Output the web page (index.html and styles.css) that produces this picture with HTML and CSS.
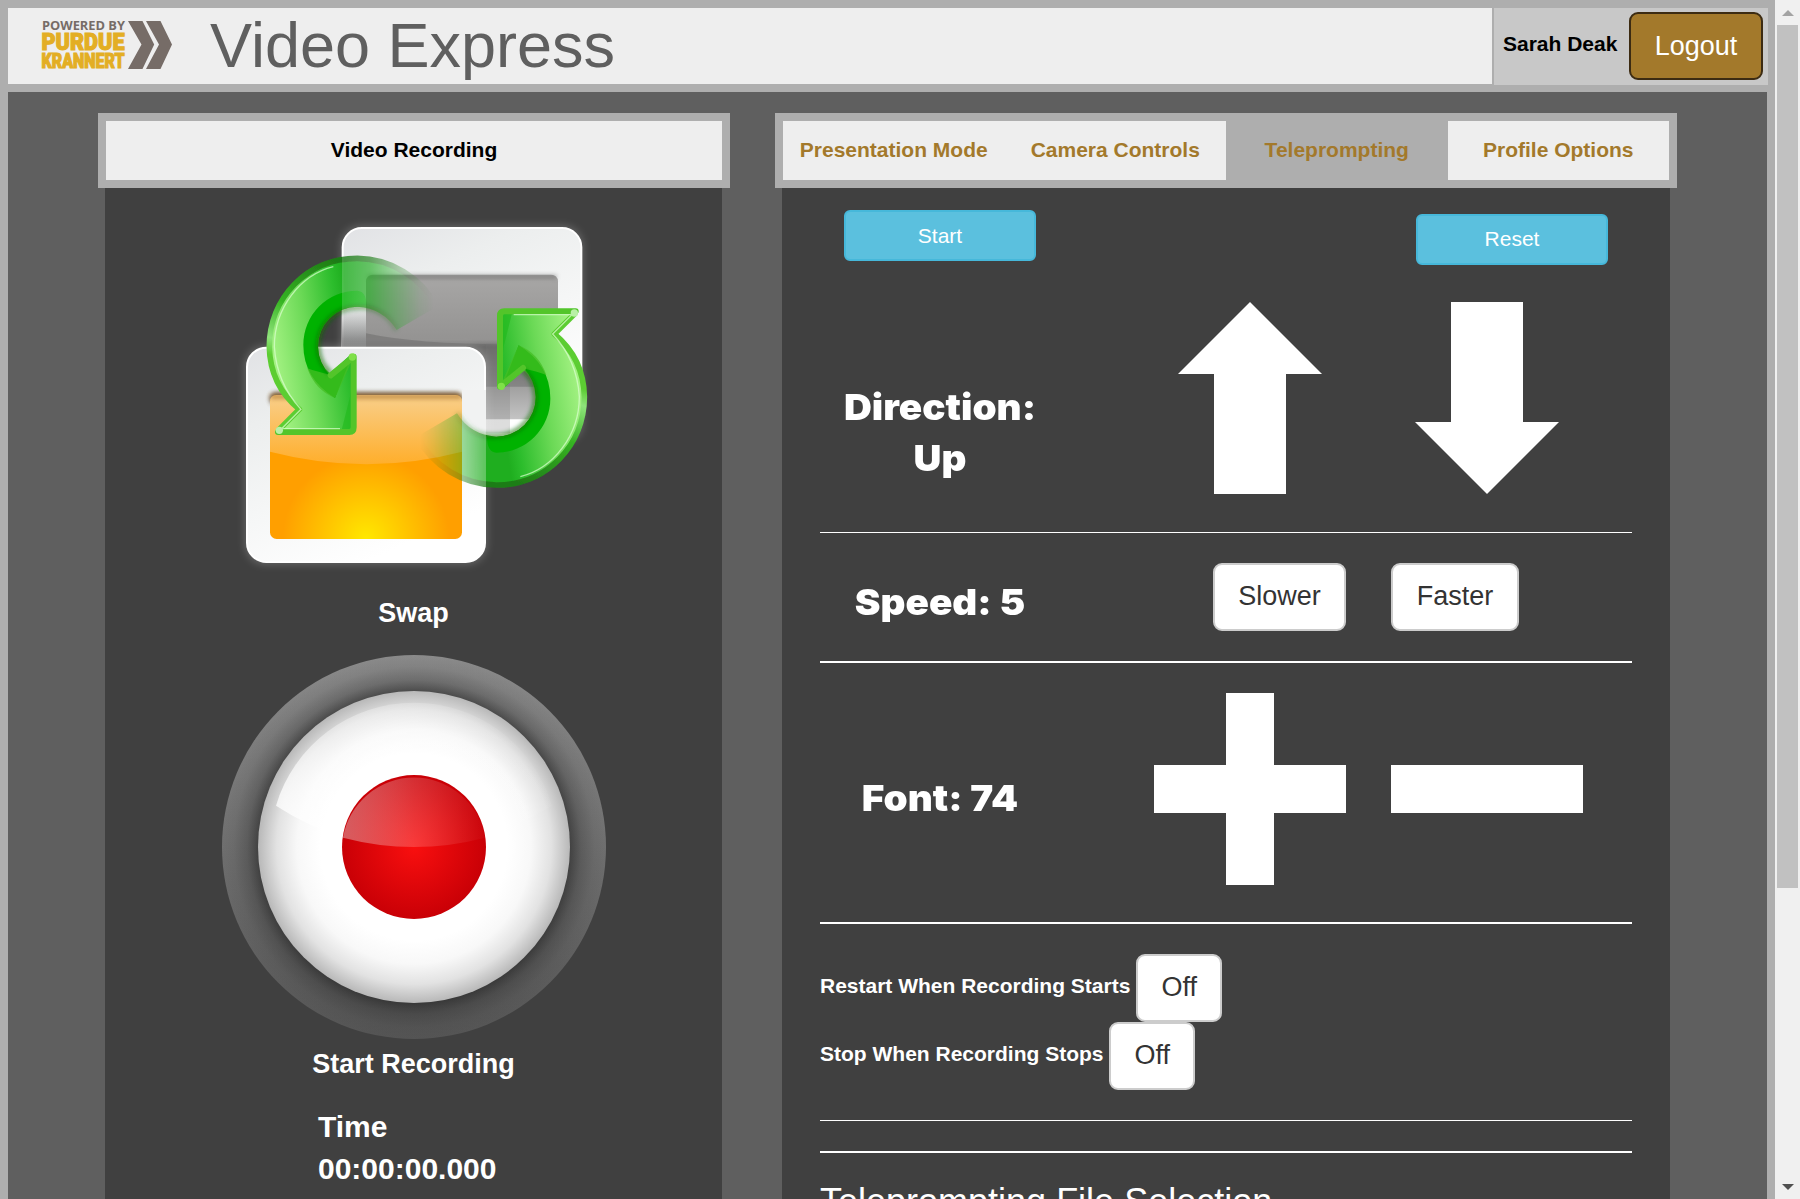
FILE: index.html
```html
<!DOCTYPE html>
<html lang="en">
<head>
<meta charset="utf-8">
<title>Video Express</title>
<link rel="stylesheet" href="styles.css">
</head>
<body>
<div class="window">
  <div class="app">
    <header class="header">
      <div class="brand">
        <svg class="logo" viewBox="0 0 140 50" width="140" height="50" role="img" aria-label="Powered by Purdue Krannert">
          <text class="logo-small" x="2" y="10" textLength="83" lengthAdjust="spacingAndGlyphs">POWERED BY</text>
          <text class="logo-purdue" x="1.500" y="30" textLength="83" lengthAdjust="spacingAndGlyphs">PURDUE</text>
          <text class="logo-krannert" x="1.500" y="47.700" textLength="83" lengthAdjust="spacingAndGlyphs">KRANNERT</text>
          <path fill="#766c67" d="M88 1h14.500l11.700 23.500L102.500 49H88l13.500-24.500zM106 1h14.500L132 24.500 120.500 49H106l13-24.500z"/>
        </svg>
        <h1 class="title">Video Express</h1>
      </div>
      <div class="user">
        <span class="user-name">Sarah Deak</span>
        <button class="btn btn-logout">Logout</button>
      </div>
    </header>

    <main class="main">
      <section class="card card-video">
        <div class="tabs"><div class="tab tab-title">Video Recording</div></div>
        <div class="body video-body">
          <svg class="swap-icon" viewBox="-18 0 1200 1182" width="400" height="394">
            <defs>
              <linearGradient id="frame" x1="0" y1="0" x2=".5" y2="1">
                <stop offset="0" stop-color="#e1e2e5"/><stop offset=".3" stop-color="#eceeee"/><stop offset="1" stop-color="#fff"/>
              </linearGradient>
              <linearGradient id="grey" x1="0" y1="0" x2="0" y2="1">
                <stop offset="0" stop-color="#a8a7a6"/><stop offset=".45" stop-color="#949392"/><stop offset=".5" stop-color="#757473"/><stop offset="1" stop-color="#c4c4c4"/>
              </linearGradient>
              <radialGradient id="orange" gradientUnits="userSpaceOnUse" cx="438" cy="1015" r="250">
                <stop offset="0" stop-color="#ffe800"/><stop offset="1" stop-color="#ff9f00"/>
              </radialGradient>
              <linearGradient id="gloss" x1="0" y1="0" x2="0" y2="1">
                <stop offset="0" stop-color="#f8d49a" stop-opacity=".9"/><stop offset="1" stop-color="#ffb030" stop-opacity=".9"/>
              </linearGradient>
              <linearGradient id="shade" x1="0" y1="0" x2="0" y2="1">
                <stop offset="0" stop-color="#333" stop-opacity="0"/><stop offset="1" stop-color="#333" stop-opacity=".65"/>
              </linearGradient>
              <linearGradient id="green" gradientUnits="userSpaceOnUse" x1="155" y1="440" x2="400" y2="400">
                <stop offset="0" stop-color="#a4f283"/><stop offset=".45" stop-color="#6bd956"/><stop offset=".85" stop-color="#2cbd2c"/><stop offset="1" stop-color="#1fae1f"/>
              </linearGradient>
              <linearGradient id="edge" gradientUnits="userSpaceOnUse" x1="300" y1="168" x2="200" y2="480">
                <stop offset="0" stop-color="#1f7d17"/><stop offset=".5" stop-color="#36b422"/><stop offset=".85" stop-color="#8fe37b"/><stop offset="1" stop-color="#5bcd31"/>
              </linearGradient>
              <linearGradient id="fadeBack" gradientUnits="userSpaceOnUse" x1="366" y1="0" x2="640" y2="0">
                <stop offset="0" stop-color="#fff"/><stop offset="0" stop-color="#d0d0d0"/><stop offset=".3" stop-color="#a8a8a8"/><stop offset=".6" stop-color="#555"/><stop offset=".85" stop-color="#151515"/><stop offset="1" stop-color="#000"/>
              </linearGradient>
              <linearGradient id="fadeFront" gradientUnits="userSpaceOnUse" x1="443" y1="0" x2="640" y2="0">
                <stop offset="0" stop-color="#fff"/><stop offset="0" stop-color="#b8b8b8"/><stop offset=".4" stop-color="#666"/><stop offset=".8" stop-color="#1c1c1c"/><stop offset="1" stop-color="#000"/>
              </linearGradient>
              <mask id="tailBack" maskUnits="userSpaceOnUse" x="100" y="100" width="600" height="660"><rect x="100" y="100" width="600" height="660" fill="url(#fadeBack)"/><rect x="100" y="430" width="330" height="330" fill="#fff"/></mask>
              <mask id="tailFront" maskUnits="userSpaceOnUse" x="100" y="100" width="600" height="660"><rect x="100" y="100" width="600" height="660" fill="url(#fadeFront)"/></mask>
              <filter id="glow" x="-10%" y="-10%" width="120%" height="120%"><feGaussianBlur stdDeviation="13"/></filter>
              <filter id="soft" filterUnits="userSpaceOnUse" x="0" y="0" width="1200" height="1182"><feGaussianBlur stdDeviation="6"/></filter>
              <filter id="bevel" filterUnits="userSpaceOnUse" x="0" y="0" width="1200" height="1182"><feGaussianBlur stdDeviation="1.500"/></filter>
              <g id="arrow">
                <path fill="url(#green)" d="M650 320A272 272 0 0 0 412 175C260 175 147 295 147 440Q147 555 240 628L172 686Q165 703 185 700H388Q404 700 404 684V472Q398 458 386 469L330 520Q294 490 294 440A118 118 0 0 1 412 320Q490 325 530 390Z"/>
                <path fill="#00b200" d="M412 272Q440 274 440 320H412A118 118 0 0 0 294 440Q296 490 332 528Q360 520 390 480L345 594Q250 535 250 435A162 162 0 0 1 412 272Z"/>
                <path fill="#45be24" d="M332 525L402 468 345 594Q285 570 262 505Q290 515 332 525Z" opacity=".75"/>
                <path fill="#20b91a" d="M390 590L402 500V690H365Z" opacity=".6"/>
                <path fill="none" stroke="#126d08" stroke-opacity=".65" stroke-width="14" filter="url(#soft)" d="M530 390A118 118 0 0 0 412 322A118 118 0 0 0 294 440Q296 490 332 520"/>
                <path fill="none" stroke="url(#edge)" stroke-width="17" stroke-linejoin="round" filter="url(#bevel)" d="M650 320A272 272 0 0 0 412 175C260 175 148 295 148 440Q150 555 238 628L174 692"/>
                <path fill="none" stroke="#52c52b" stroke-width="18" stroke-linejoin="round" stroke-linecap="round" filter="url(#bevel)" d="M174 696H388Q401 696 401 682V470L332 526"/>
                <path fill="none" stroke="#dcffd0" stroke-opacity=".7" stroke-width="4" d="M340 200C240 225 163 325 163 440Q170 550 243 628L185 686H360"/>
                <circle cx="178" cy="691" r="11" fill="#b8f0a6"/><circle cx="397" cy="471" r="11" fill="#7fe048"/>
              </g>
            </defs>
            <rect x="364" y="78" width="724" height="650" rx="60" fill="#fff" opacity=".22" filter="url(#glow)"/>
            <rect x="368" y="84" width="716" height="638" rx="58" fill="url(#frame)" stroke="#fff" stroke-width="6"/>
            <rect x="438" y="224" width="576" height="434" rx="20" fill="url(#grey)"/>
            <path d="M442 230H1010" stroke="#555" stroke-width="10" opacity=".55" filter="url(#soft)"/>
            <path d="M438 400Q620 440 1014 432V560H438Z" fill="#555" opacity=".35"/>
            <rect x="366" y="320" width="72" height="125" fill="url(#shade)"/>
            <rect x="798" y="430" width="72" height="270" fill="#777" opacity=".25"/>
            <rect x="76" y="438" width="724" height="654" rx="60" fill="#fff" opacity=".22" filter="url(#glow)"/>
            <rect x="81" y="443" width="714" height="643" rx="58" fill="url(#frame)" stroke="#fff" stroke-width="6"/>
            <rect x="148" y="576" width="580" height="40" rx="20" fill="#5b4325" opacity=".8" filter="url(#soft)"/>
            <rect x="150" y="585" width="576" height="432" rx="20" fill="url(#orange)"/>
            <path d="M170 585H706Q726 585 726 605V755Q440 830 150 755V605Q150 585 170 585Z" fill="url(#gloss)"/>
            <path d="M152 590H724" stroke="#a46c20" stroke-width="14" opacity=".6" filter="url(#soft)"/>
            <path d="M726 630Q750 680 798 700V570H726Z" fill="#f1f2f2"/>
            <g mask="url(#tailBack)"><use href="#arrow"/></g>
            <g transform="rotate(180 620.5 515)"><g mask="url(#tailFront)"><use href="#arrow"/></g></g>
          </svg>
          <div class="caption">Swap</div>
          <svg class="record-icon" viewBox="0 0 1152 1152" width="384" height="384">
            <defs>
              <linearGradient id="ring" x1="0" y1="0" x2="0" y2="1"><stop offset="0" stop-color="#8a8a8a"/><stop offset="1" stop-color="#545454"/></linearGradient>
              <radialGradient id="ringShadow"><stop offset=".81" stop-color="#1c1c1c" stop-opacity=".55"/><stop offset=".87" stop-color="#222" stop-opacity=".25"/><stop offset=".94" stop-color="#222" stop-opacity=".06"/><stop offset="1" stop-color="#222" stop-opacity="0"/></radialGradient>
              <radialGradient id="ball"><stop offset=".6" stop-color="#fff"/><stop offset=".75" stop-color="#f8f8f8"/><stop offset=".88" stop-color="#e2e2e2"/><stop offset="1" stop-color="#b8b8b8"/></radialGradient>
              <radialGradient id="dot"><stop offset="0" stop-color="#f90f0f"/><stop offset="1" stop-color="#c90006"/></radialGradient>
              <linearGradient id="shine" x1="0" y1=".5" x2="1" y2=".3"><stop offset="0" stop-color="#fff" stop-opacity=".75"/><stop offset=".25" stop-color="#fff" stop-opacity=".4"/><stop offset=".6" stop-color="#fff" stop-opacity=".2"/><stop offset="1" stop-color="#fff" stop-opacity="0"/></linearGradient>
              <linearGradient id="dotShine" x1="0" y1="0" x2="1" y2="0"><stop offset="0" stop-color="#e8e8e8" stop-opacity=".4"/><stop offset=".5" stop-color="#fff" stop-opacity=".18"/><stop offset="1" stop-color="#fff" stop-opacity=".02"/></linearGradient>
            </defs>
            <circle cx="576" cy="576" r="576" fill="url(#ring)"/>
            <circle cx="576" cy="576" r="576" fill="url(#ringShadow)"/>
            <circle cx="576" cy="576" r="468" fill="url(#ball)"/>
            <path d="M162 452A432 432 0 0 1 990 452Q780 575 576 575Q350 575 162 452Z" fill="url(#shine)"/>
            <circle cx="576" cy="576" r="216" fill="url(#dot)"/>
            <path d="M363 548A216 216 0 0 1 789 548Q576 604 363 548Z" fill="url(#dotShine)"/>
          </svg>
          <div class="caption caption-record">Start Recording</div>
          <div class="timer">Time<br>00:00:00.000</div>
        </div>
      </section>

      <section class="card card-controls">
        <nav class="tabs">
          <a class="tab">Presentation Mode</a>
          <a class="tab">Camera Controls</a>
          <a class="tab tab-active">Teleprompting</a>
          <a class="tab">Profile Options</a>
        </nav>
        <div class="body controls-body">
          <div class="actions">
            <button class="btn btn-info">Start</button>
            <button class="btn btn-info btn-reset">Reset</button>
          </div>
          <div class="row row-direction">
            <div class="readout">Direction:<br>Up</div>
            <svg class="glyph" viewBox="0 0 192 192"><path d="M96 0l72 72h-36v120H60V72H24z"/></svg>
            <svg class="glyph" viewBox="0 0 192 192"><path d="M96 192l72-72h-36V0H60v120H24z"/></svg>
          </div>
          <hr class="rule rule-thin">
          <div class="row row-speed">
            <div class="readout">Speed: 5</div>
            <div class="cell"><button class="btn btn-default btn-slower">Slower</button></div>
            <div class="cell"><button class="btn btn-default btn-faster">Faster</button></div>
          </div>
          <hr class="rule">
          <div class="row row-font">
            <div class="readout">Font: 74</div>
            <svg class="glyph" viewBox="0 0 192 192"><path d="M72 0h48v72h72v48h-72v72H72v-72H0V72h72z"/></svg>
            <svg class="glyph" viewBox="0 0 192 192"><path d="M0 72h192v48H0z"/></svg>
          </div>
          <hr class="rule">
          <div class="options">
            <div class="option"><span>Restart When Recording Starts</span><button class="btn btn-default btn-off">Off</button></div>
            <div class="option"><span>Stop When Recording Stops</span><button class="btn btn-default btn-off">Off</button></div>
          </div>
          <hr class="rule rule-thin">
          <hr class="rule rule-second">
          <h2 class="subtitle">Teleprompting File Selection</h2>
        </div>
      </section>
    </main>
  </div>
  <div class="scrollbar">
    <svg class="scroll-arrow" viewBox="0 0 12 6"><path fill="#a3a3a3" d="M0 6L6 0l6 6z"/></svg>
    <div class="thumb"></div>
    <svg class="scroll-arrow scroll-down" viewBox="0 0 12 6"><path fill="#505050" d="M0 0h12L6 6z"/></svg>
  </div>
</div>
</body>
</html>
```
FILE: styles.css
```css
* { box-sizing: border-box; }

body {
  margin: 0;
  overflow: hidden;
  font: 21px/30px "Liberation Sans", Arial, sans-serif;
  color: #fff;
}

.window { display: flex; height: 1199px; overflow: hidden; }

.app {
  width: 1775px;
  border: 8px solid #aeaeae;
  border-bottom: 0;
  background: #5f5f5f;
}

/* Header */
.header {
  display: flex;
  gap: 2px;
  height: 84px;
  margin-right: -1px;
  background: #aeaeae;
}
.brand { display: flex; width: 1484px; height: 76px; background: #eee; }
.logo { margin: 12px 0 0 32px; flex: none; overflow: visible; }
.logo-small { font: 700 12px "Open Sans", sans-serif; fill: #766c67; }
.logo-purdue, .logo-krannert { font-family: "Roboto", sans-serif; font-weight: 900; fill: #e3ae24; stroke: #e3ae24; stroke-width: 1.2px; }
.logo-purdue { font-size: 24px; }
.logo-krannert { font-size: 20.500px; }
.title { margin: 0 0 0 30px; font-size: 63px; line-height: 75px; font-weight: 400; color: #5f5f5f; }
.user {
  display: flex;
  align-items: flex-start;
  justify-content: space-between;
  width: 274px;
  height: 77px;
  padding: 4px 5px 0 9px;
  background: #c8c8c8;
}
.user-name { margin-top: 17px; font-weight: 700; color: #000; }

/* Buttons */
.btn {
  display: block;
  padding: 0;
  border: 2px solid;
  border-radius: 9px;
  font: 27px/64px "Liberation Sans", Arial, sans-serif;
  text-align: center;
  height: 68px;
}
.btn-logout { width: 134px; color: #fff; background: #a3792b; border-color: #3c2b12; }
.btn-default { color: #333; background: #fff; border-color: #ccc; line-height: 62px; padding-bottom: 2px; }
.btn-info { width: 192px; height: 51px; border-radius: 6px; font-size: 21px; line-height: 47px; color: #fff; background: #5bc0de; border-color: #46b8da; }

/* Cards */
.main { display: flex; align-items: flex-start; gap: 45px; padding: 21px 0 0 90px; }
.card { flex: none; }
.card-video { width: 632px; }
.card-controls { width: 902px; }
.tabs { display: flex; height: 75px; border: 8px solid #aeaeae; background: #eee; }
.tab { flex: 1 1 0; line-height: 58px; font-weight: 700; text-align: center; white-space: nowrap; color: #a3792b; }
.tab-title { color: #000; }
.tab-active { background: #aeaeae; }
.body { margin: 0 7px; height: 1011px; background: #404040; overflow: hidden; }

.video-body { display: flex; flex-direction: column; align-items: center; padding-top: 12px; margin-right: 8px; }
.swap-icon, .record-icon { display: block; flex: none; }
.caption { height: 38px; line-height: 38px; font-size: 27px; font-weight: 700; margin-bottom: 23px; flex: none; }
.caption-record { margin: 6px 0 23px; }
.timer { align-self: flex-start; margin-left: 213px; font-size: 30px; line-height: 42px; font-weight: 700; }

/* Teleprompting controls */
.controls-body { padding: 22px 38px 0; }
.actions { display: flex; justify-content: space-between; padding: 0 24px; }
.btn-reset { margin-top: 4px; line-height: 46px; padding-bottom: 1px; }
.row { display: grid; grid-template-columns: 265px 192px 192px; column-gap: 45px; padding-left: 24px; }
.readout {
  width: 192px;
  font: 900 36px/51px "Inter", "Arial Black", sans-serif;
  text-align: center;
  white-space: nowrap;
  transform: scaleX(1.073);
}
.glyph { display: block; width: 192px; height: 192px; fill: #fff; }
.row-direction { margin-top: 37px; height: 192px; }
.row-direction .readout { margin-top: 80px; }
.rule { height: 2px; margin: 30px 0; border: 0; background: #fff; }
.row-direction + .rule { margin-top: 38px; }
.rule-thin { height: 1px; }
.row-speed { height: 68px; }
.row-speed .readout { margin-top: 14px; }
.cell { display: flex; }
.btn-slower { width: 133px; margin-left: 59px; }
.btn-faster { width: 128px; }
.row-font { height: 192px; }
.row-font .readout { margin-top: 80px; }
.row-font + .rule { margin-top: 37px; }
.option { display: flex; gap: 5.800px; height: 68px; font-weight: 700; line-height: 63px; }
.btn-off { width: 86px; }
.rule-second { margin-bottom: 29px; }
.subtitle { margin: 0; font-size: 36px; line-height: 40px; font-weight: 400; }

/* Window scrollbar */
.scrollbar { display: flex; flex-direction: column; align-items: center; width: 25px; height: 1199px; padding: 10px 0 9px; background: #f0f0f0; }
.scroll-arrow { width: 12px; height: 6px; flex: none; }
.thumb { width: 21px; height: 863px; margin-top: 9px; background: #c1c1c1; }
.scroll-down { margin-top: auto; }
```
